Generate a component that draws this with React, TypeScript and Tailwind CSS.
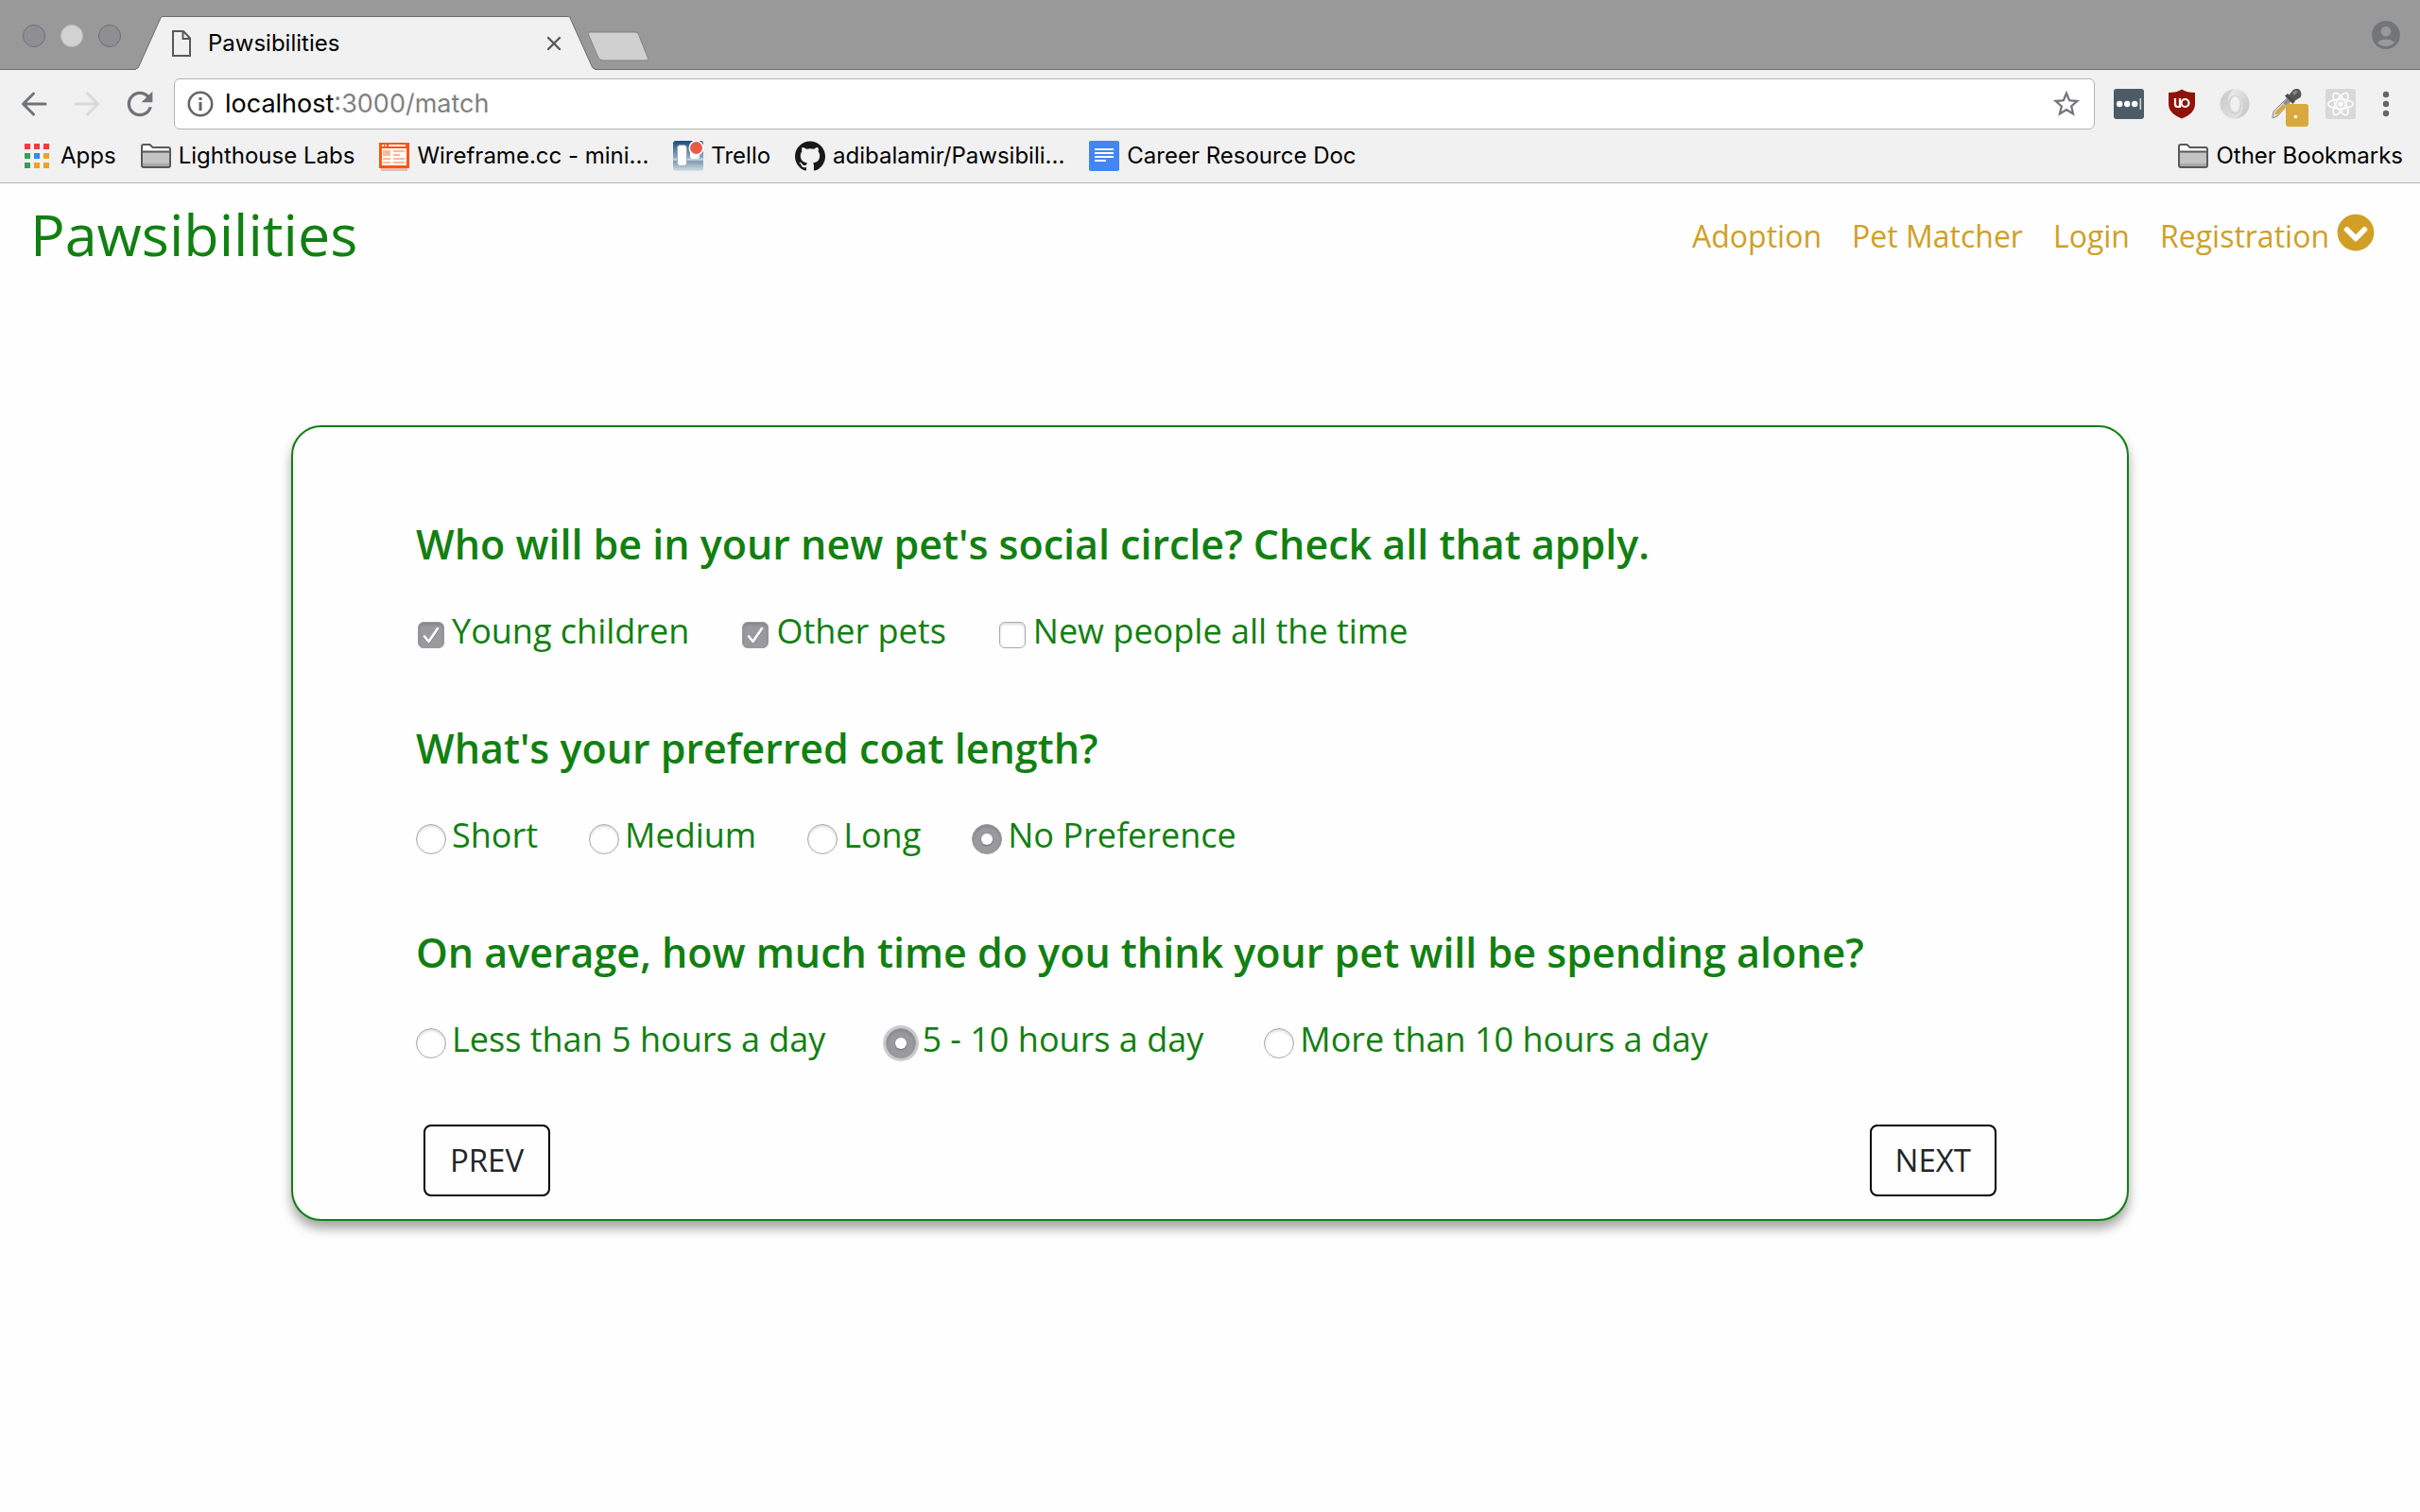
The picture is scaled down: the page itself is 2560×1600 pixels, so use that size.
import { useState } from "react";
import type { ReactNode } from "react";
import { FaChevronCircleDown } from "react-icons/fa";
import { MdAccountCircle, MdRefresh, MdStarBorder } from "react-icons/md";
import { SiGithub } from "react-icons/si";

/* ---------- Browser icons ---------- */

function FileIcon() {
  return (
    <svg width="20" height="28" viewBox="0 0 20 28" fill="none" stroke="#58595b" strokeWidth="2">
      <path d="M1 1H12L19 8.500V27H1Z" />
      <path d="M11.500 1V9H19" />
    </svg>
  );
}

function CloseIcon() {
  return (
    <svg width="16" height="16" viewBox="0 0 16 16" stroke="#58595b" strokeWidth="2.400" strokeLinecap="round">
      <path d="M2 2L14 14M14 2L2 14" />
    </svg>
  );
}

function ArrowIcon({ flip = false }: { flip?: boolean }) {
  return (
    <svg
      width="28"
      height="28"
      viewBox="0 0 28 28"
      fill="none"
      stroke={flip ? "#d7d9db" : "#6f7479"}
      strokeWidth="3"
      strokeLinecap="round"
      strokeLinejoin="round"
    >
      {flip ? <path d="M2 14H25M14.500 3L25.500 14L14.500 25" /> : <path d="M26 14H3M13.500 3L2.500 14L13.500 25" />}
    </svg>
  );
}

function InfoIcon() {
  return (
    <svg width="28" height="28" viewBox="0 0 28 28" className="shrink-0">
      <circle cx="14" cy="14" r="12.200" fill="none" stroke="#62666b" strokeWidth="2.600" />
      <rect x="12.500" y="7" width="3" height="3" fill="#62666b" />
      <rect x="12.500" y="12" width="3" height="9" fill="#62666b" />
    </svg>
  );
}

function AppsIcon() {
  const colors = ["#f23b3b", "#f23b3b", "#f23b3b", "#3a9c5a", "#2a8cf4", "#f0a127", "#3a9c5a", "#f0a127", "#f0a127"];
  return (
    <svg width="26" height="26" viewBox="0 0 26 26">
      {colors.map((c, i) => (
        <rect key={i} x={(i % 3) * 10} y={Math.floor(i / 3) * 10} width="6" height="6" fill={c} />
      ))}
    </svg>
  );
}

function FolderIcon() {
  return (
    <svg width="32" height="26" viewBox="0 0 32 26">
      <path d="M1 3Q1 1 3 1H9.500L12.500 4H29Q31 4 31 6V8H1Z" fill="#fdfdfd" />
      <rect x="1" y="8" width="30" height="16" fill="#c3c3c3" />
      <rect x="2" y="21" width="28" height="3" fill="#a9a9a9" />
      <path
        d="M1 3Q1 1 3 1H9.500L12.500 4H29Q31 4 31 6V23Q31 25 29 25H3Q1 25 1 23ZM1 8.500H31"
        fill="none"
        stroke="#58595b"
        strokeWidth="2"
      />
    </svg>
  );
}

function WireframeIcon() {
  return (
    <svg width="32" height="32" viewBox="0 0 32 32">
      <rect x="2" y="29" width="28" height="3" fill="#e9bfb0" />
      <rect y="2" width="32" height="27" fill="#ff5414" />
      <path d="M3 4H5V6H3ZM6 4H8V6H6ZM10 4H28V6H10Z" fill="#fff" />
      <rect x="3" y="8" width="26" height="18" fill="#fff" />
      <path d="M4 10H12V16H4ZM15 10H27V12H15ZM15 14H22V16H15ZM4 18H12V20H4ZM15 18H27V20H15ZM4 22H12V24H4ZM15 22H27V24H15Z" fill="#ffb898" />
    </svg>
  );
}

function TrelloIcon() {
  return (
    <svg width="32" height="32" viewBox="0 0 32 32">
      <defs>
        <linearGradient id="trello-sky" x1="0" y1="0" x2="0" y2="1">
          <stop offset="0" stopColor="#1b4a7c" />
          <stop offset="0.550" stopColor="#8fa9c4" />
          <stop offset="0.620" stopColor="#cddbe6" />
          <stop offset="0.680" stopColor="#7f9bb5" />
          <stop offset="1" stopColor="#d5dfe6" />
        </linearGradient>
      </defs>
      <rect width="32" height="32" rx="3" fill="url(#trello-sky)" />
      <rect x="4.500" y="4.500" width="10" height="22" rx="3" fill="#fff" stroke="#8ea0b3" strokeWidth="0.800" />
      <rect x="18" y="8" width="10" height="11" rx="3" fill="#fff" />
      <circle cx="24.500" cy="7.500" r="8" fill="#fff" />
      <circle cx="24.500" cy="7.500" r="6.500" fill="#eb5a46" />
    </svg>
  );
}

function DocsIcon() {
  return (
    <svg width="32" height="32" viewBox="0 0 32 32">
      <rect width="32" height="32" rx="2" fill="#4285f4" />
      <path d="M6 8H26V10H6ZM6 12H26V14H6ZM6 16H26V18H6ZM6 20H18V22H6Z" fill="#fff" />
    </svg>
  );
}

function PasswordIcon() {
  return (
    <svg width="32" height="32" viewBox="0 0 32 32">
      <rect width="32" height="32" rx="3" fill="#4b5c66" />
      <circle cx="6.200" cy="16" r="3.200" fill="#fff" />
      <circle cx="14.200" cy="16" r="3.200" fill="#fff" />
      <circle cx="22.200" cy="16" r="3.200" fill="#fff" />
      <rect x="27.500" y="10" width="1.600" height="12" fill="#cdd2d5" />
    </svg>
  );
}

function ShieldIcon() {
  return (
    <svg width="28" height="32" viewBox="0 0 28 32">
      <path d="M14 0.500Q19 4 28 4V16Q28 26 14 31.500Q0 26 0 16V4Q9 4 14 0.500Z" fill="#90130b" />
      <g fill="none" stroke="#fff" strokeWidth="2.200">
        <path d="M7 10V16.500Q7 19 9.500 19H12V10" />
        <circle cx="17.500" cy="15" r="4" />
      </g>
    </svg>
  );
}

function RingIcon() {
  return (
    <svg width="32" height="32" viewBox="0 0 32 32">
      <defs>
        <linearGradient id="ring-a" x1="0" y1="0" x2="1" y2="1">
          <stop offset="0" stopColor="#c8c8c8" />
          <stop offset="1" stopColor="#e9e9e9" />
        </linearGradient>
        <linearGradient id="ring-b" x1="0" y1="0" x2="1" y2="1">
          <stop offset="0" stopColor="#eeeeee" />
          <stop offset="1" stopColor="#c2c2c2" />
        </linearGradient>
      </defs>
      <path
        fillRule="evenodd"
        d="M16 0.500A15.500 15.500 0 1 0 16 31.500A15.500 15.500 0 1 0 16 0.500ZM16.500 8C19.500 8 21 12 21 16C21 20 19.500 24 16.500 24C13.500 24 11.500 20 11.500 16C11.500 12 13.500 8 16.500 8Z"
        fill="url(#ring-a)"
      />
      <path d="M16 0.500C25 0.500 31.500 8 31.500 16C31.500 24 25 31 17 31.500C23 28 25 23 24.500 17C24 10 20 6.500 15.500 7C12.500 7.500 10 10 9 13C9 7 11.500 2.500 16 0.500Z" fill="url(#ring-b)" />
      <path d="M9 13C8.500 20 11 26 17 26C21 25.500 22.500 21 22.500 17" fill="none" stroke="#d2d2d2" strokeWidth="1.500" />
    </svg>
  );
}

function DropperIcon() {
  return (
    <svg width="40" height="40" viewBox="0 0 40 40">
      <path d="M1 29L2 24L16 10L20 14L6 29L1 31Z" fill="#d8d8d4" stroke="#8f8f8f" strokeWidth="1" />
      <path d="M3.500 27L4 24.500L12 16.500L15 19L6.500 27Z" fill="#dba93b" />
      <path d="M12 15L18 9L21 12L15 18Z" fill="#8b8f94" />
      <path d="M14 7.500L17 5L25 13L22.500 16Z" fill="#4a4a4a" />
      <path d="M18 7L23 1Q27 -1.500 30 1.500Q32.500 5 30.500 9L24 13Z" fill="#555" />
      <path d="M22 4L25 2L28 3L24 7Z" fill="#8a8a8a" />
      <rect x="15" y="16" width="24" height="24" rx="3" fill="#d9a93d" />
      <circle cx="25.500" cy="29.500" r="1.800" fill="#fff" />
    </svg>
  );
}

function ReactIcon() {
  return (
    <svg width="32" height="32" viewBox="0 0 32 32">
      <rect width="32" height="32" rx="2" fill="#d9d9d9" />
      <g fill="none" stroke="#fff" strokeWidth="1.500">
        <ellipse cx="16" cy="16" rx="13.200" ry="5" />
        <ellipse cx="16" cy="16" rx="13.200" ry="5" transform="rotate(60 16 16)" />
        <ellipse cx="16" cy="16" rx="13.200" ry="5" transform="rotate(120 16 16)" />
      </g>
      <circle cx="16" cy="16" r="2.800" fill="#fff" />
    </svg>
  );
}

function MenuDotsIcon() {
  return (
    <svg width="8" height="28" viewBox="0 0 8 28" fill="#62666b">
      <circle cx="4" cy="4" r="3.200" />
      <circle cx="4" cy="14" r="3.200" />
      <circle cx="4" cy="24" r="3.200" />
    </svg>
  );
}

/* ---------- Browser chrome ---------- */

function TabEdge({ side }: { side: "left" | "right" }) {
  return (
    <svg width="29" height="57" viewBox="0 0 29 57" className="shrink-0">
      <g transform={side === "right" ? "translate(29 0) scale(-1 1)" : undefined}>
        <path d="M0 57V56C1.500 56 2 55 3 53L25.500 3C26.300 1 27 0.500 29 0.500V57Z" fill="#f1f1f1" />
        <path d="M0 55.500C1.500 55.500 2 55 3 53L25.500 3C26.300 1 27 0.500 29 0.500" fill="none" stroke="#6c6c6c" />
      </g>
    </svg>
  );
}

function TabStrip() {
  return (
    <div className="flex h-[74px] items-end border-b border-[#6c6c6c] bg-[#999999]">
      <div className="flex gap-4 self-start pt-[26px] pl-6">
        <button aria-label="Close window" className="size-6 rounded-full border border-[#6f6f74] bg-[#8f8e94]" />
        <button aria-label="Minimize window" className="size-6 rounded-full border border-[#bdbdbd] bg-[#d2d2d2]" />
        <button aria-label="Zoom window" className="size-6 rounded-full border border-[#6f6f74] bg-[#8f8e94]" />
      </div>
      <div className="-mb-px ml-4 flex h-[57px]">
        <TabEdge side="left" />
        <div className="flex w-[427px] items-center border-t border-[#6c6c6c] bg-[#f1f1f1] pr-1.5 pl-[9px]">
          <FileIcon />
          <span className="ml-[18px] text-2xl">Pawsibilities</span>
          <button aria-label="Close tab" className="ml-auto">
            <CloseIcon />
          </button>
        </div>
        <TabEdge side="right" />
      </div>
      <button aria-label="New tab" className="mb-2 -ml-2">
        <svg width="66" height="32" viewBox="0 0 66 32">
          <path d="M3 1H51Q53.500 1 54.500 3.500L64 27.500Q65.500 31 62 31H17Q13.500 31 12 28L1.500 3.500Q0.500 1 3 1Z" fill="#d0d0d0" stroke="#858585" />
        </svg>
      </button>
      <button aria-label="Profile" className="mr-[18px] ml-auto self-center">
        <MdAccountCircle className="size-9 text-[#72767b]" />
      </button>
    </div>
  );
}

function ToolButton({ label, children }: { label: string; children: ReactNode }) {
  return (
    <button aria-label={label} className="flex size-10 shrink-0 items-center justify-center">
      {children}
    </button>
  );
}

function Toolbar() {
  return (
    <div className="flex items-center gap-4 pt-[9px] pr-6 pl-4">
      <ToolButton label="Back">
        <ArrowIcon />
      </ToolButton>
      <ToolButton label="Forward">
        <ArrowIcon flip />
      </ToolButton>
      <ToolButton label="Reload">
        <MdRefresh className="size-10 text-[#6f7479]" />
      </ToolButton>
      <div className="flex h-[54px] grow items-center rounded-md border border-[#b5b5b5] bg-white pr-3 pl-[13px] text-[27px]">
        <InfoIcon />
        <label htmlFor="address" className="ml-3">
          localhost
        </label>
        <input id="address" defaultValue=":3000/match" className="min-w-0 grow text-[#808080] outline-none" />
        <button aria-label="Bookmark this page">
          <MdStarBorder className="size-[34px] text-[#72767b]" />
        </button>
      </div>
      <ToolButton label="Password manager">
        <PasswordIcon />
      </ToolButton>
      <ToolButton label="Ad blocker">
        <ShieldIcon />
      </ToolButton>
      <ToolButton label="JSON viewer">
        <RingIcon />
      </ToolButton>
      <ToolButton label="Color picker">
        <span className="mt-2 ml-1.5">
          <DropperIcon />
        </span>
      </ToolButton>
      <ToolButton label="React developer tools">
        <ReactIcon />
      </ToolButton>
      <button aria-label="Menu" className="flex h-10 w-6 shrink-0 items-center justify-center">
        <MenuDotsIcon />
      </button>
    </div>
  );
}

function Bookmark({ icon, children }: { icon: ReactNode; children: ReactNode }) {
  return (
    <a href="#" className="flex items-center gap-2 whitespace-nowrap">
      {icon}
      <span>{children}</span>
    </a>
  );
}

function BookmarksBar() {
  return (
    <nav aria-label="Bookmarks" className="flex h-14 items-center gap-[26px] pr-[18px] pl-[26px] text-2xl">
      <a href="#" className="flex items-center gap-3">
        <AppsIcon />
        <span>Apps</span>
      </a>
      <Bookmark icon={<FolderIcon />}>Lighthouse Labs</Bookmark>
      <Bookmark icon={<WireframeIcon />}>Wireframe.cc - mini...</Bookmark>
      <Bookmark icon={<TrelloIcon />}>Trello</Bookmark>
      <Bookmark icon={<SiGithub className="size-8 text-[#191717]" />}>adibalamir/Pawsibili...</Bookmark>
      <Bookmark icon={<DocsIcon />}>Career Resource Doc</Bookmark>
      <div className="ml-auto">
        <Bookmark icon={<FolderIcon />}>Other Bookmarks</Bookmark>
      </div>
    </nav>
  );
}

/* ---------- Page ---------- */

function SiteHeader() {
  return (
    <header className="flex items-center justify-between pt-3 pr-12 pl-8">
      <a href="#" className="text-[61px] leading-[84px] text-[#118011]">
        Pawsibilities
      </a>
      <nav className="flex items-center gap-8 pt-1 text-[32px] leading-[48px] text-[#d19f25]">
        <a href="#">Adoption</a>
        <a href="#">Pet Matcher</a>
        <a href="#">Login</a>
        <button className="flex items-center gap-2">
          Registration
          <FaChevronCircleDown className="mb-2 size-10" />
        </button>
      </nav>
    </header>
  );
}

type Kind = "checkbox" | "radio";

function Choice({
  kind,
  name,
  label,
  checked,
  highlighted,
  onChange,
}: {
  kind: Kind;
  name: string;
  label: string;
  checked: boolean;
  highlighted: boolean;
  onChange: () => void;
}) {
  return (
    <label className="flex items-start gap-1.5">
      <span className="mt-3.5 grid size-8 place-items-center">
        <input
          type={kind}
          name={name}
          checked={checked}
          onChange={onChange}
          className={
            (kind === "radio" ? "size-8 rounded-full " : "size-7 rounded-md ") +
            (highlighted ? "ring-3 ring-[#cbcbcd] " : "") +
            "col-start-1 row-start-1 appearance-none border border-[#a9a9a9] bg-white shadow-[inset_0_2px_3px_rgba(0,0,0,0.14)] outline-none checked:border-[#9a999e] checked:bg-[#9a999e]"
          }
        />
        {checked && kind === "radio" && (
          <span className="pointer-events-none col-start-1 row-start-1 size-3 rounded-full bg-white shadow-[0_1px_2px_rgba(0,0,0,0.3)]" />
        )}
        {checked && kind === "checkbox" && (
          <svg
            viewBox="0 0 28 28"
            className="pointer-events-none col-start-1 row-start-1 size-7"
            fill="none"
            strokeLinecap="round"
            strokeLinejoin="round"
          >
            <path d="M7 16.500L11.500 22L21 8" stroke="#7f7e83" strokeWidth="2.600" />
            <path d="M7 15.500L11.500 21L21 7" stroke="#fff" strokeWidth="2.600" />
          </svg>
        )}
      </span>
      {label}
    </label>
  );
}

type QuestionData = {
  kind: Kind;
  name: string;
  title: string;
  options: string[];
  initial: number[];
  active?: number;
  spacing: string;
};

const QUESTIONS: QuestionData[] = [
  {
    kind: "checkbox",
    name: "social",
    title: "Who will be in your new pet's social circle? Check all that apply.",
    options: ["Young children", "Other pets", "New people all the time"],
    initial: [0, 1],
    spacing: "gap-[54px]",
  },
  {
    kind: "radio",
    name: "coat",
    title: "What's your preferred coat length?",
    options: ["Short", "Medium", "Long", "No Preference"],
    initial: [3],
    spacing: "gap-[54px]",
  },
  {
    kind: "radio",
    name: "alone",
    title: "On average, how much time do you think your pet will be spending alone?",
    options: ["Less than 5 hours a day", "5 - 10 hours a day", "More than 10 hours a day"],
    initial: [1],
    active: 1,
    spacing: "gap-16",
  },
];

function Question({ kind, name, title, options, initial, active, spacing }: QuestionData) {
  const [picked, setPicked] = useState(initial);
  const toggle = (i: number) =>
    setPicked((p) => (kind === "radio" ? [i] : p.includes(i) ? p.filter((x) => x !== i) : [...p, i]));
  return (
    <fieldset>
      <legend className="text-[43px] leading-[52px] font-semibold">{title}</legend>
      <div className={"mt-10 flex text-4xl leading-[52px] " + spacing}>
        {options.map((option, i) => (
          <Choice
            key={option}
            kind={kind}
            name={name}
            label={option}
            checked={picked.includes(i)}
            highlighted={active === i}
            onChange={() => toggle(i)}
          />
        ))}
      </div>
    </fieldset>
  );
}

function StepButton({ children }: { children: ReactNode }) {
  return (
    <button type="button" className="h-19 min-w-[134px] rounded-lg border-2 border-black px-[25px] text-[33px] text-[#212529]">
      {children}
    </button>
  );
}

export default function App() {
  return (
    <div className="min-h-screen bg-[#fefefe]">
      <div className="border-b border-[#b5b5b5] bg-[#f1f1f1] font-['Inter',sans-serif] text-black">
        <TabStrip />
        <Toolbar />
        <BookmarksBar />
      </div>
      <div className="font-['Open_Sans',sans-serif]">
        <SiteHeader />
        <main className="px-[308px] pt-40">
          <form className="rounded-[32px] border-2 border-[#118011] bg-[#fefefe] px-[130px] pt-[98px] pb-6 text-[#118011] shadow-[0_8px_12px_rgba(0,0,0,0.35)]">
            <div className="flex flex-col gap-18">
              {QUESTIONS.map((q) => (
                <Question key={q.name} {...q} />
              ))}
            </div>
            <div className="mx-2 mt-16 flex justify-between">
              <StepButton>PREV</StepButton>
              <StepButton>NEXT</StepButton>
            </div>
          </form>
        </main>
      </div>
    </div>
  );
}
